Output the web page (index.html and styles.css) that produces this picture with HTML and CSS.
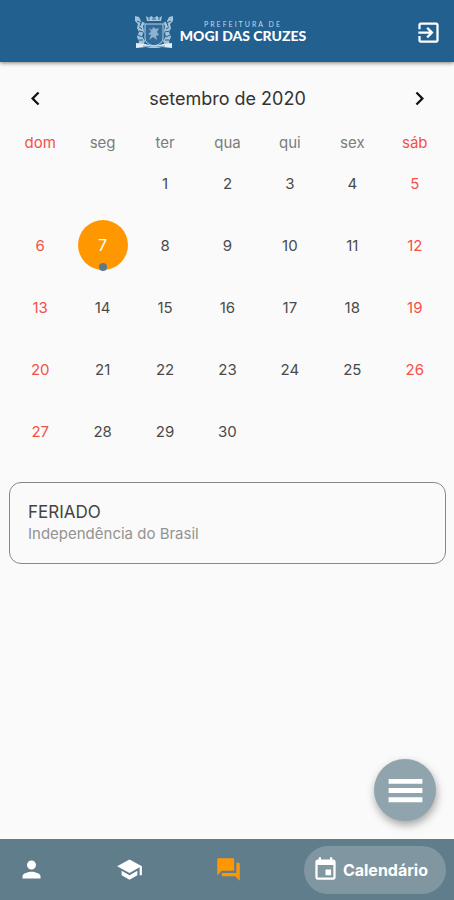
FILE: index.html
```html
<!DOCTYPE html>
<html lang="pt-BR">
  <head>
    <meta charset="UTF-8" />
    <meta name="viewport" content="width=device-width, initial-scale=1.0" />
    <title>Calendário - Mogi das Cruzes</title>
    <link rel="stylesheet" href="styles.css">
  </head>
  <body>
    <header class="topbar">
      <div class="brand">
        <svg class="crest" viewBox="0 0 40 36" aria-hidden="true">
          <!-- mural crown -->
          <path d="M12 2l3 2 2-2 3 2 3-2 2 2 3-2-1 5H13z" fill="#a9c6dd" />
          <path d="M14 5h2M18 5h4M24 5h2" stroke="#22608f" stroke-width="1" />
          <!-- supporters -->
          <path d="M1 2l4 1 2 4 4 2-2 3 1 5-2 5 3 5-2 5H4l1-5-2-4 2-5-2-4 1-4-3-3z" fill="#a4c2d9" />
          <path d="M39 2l-4 1-2 4-4 2 2 3-1 5 2 5-3 5 2 5h5l-1-5 2-4-2-5 2-4-1-4 3-3z" fill="#a4c2d9" />
          <path d="M3 7l5 2M5 13l3 2M4 21l4 2M37 7l-5 2M35 13l-3 2M36 21l-4 2M8 6l-2 6M32 6l2 6M5 17l4 1M35 17l-4 1M5 26l4 0M35 26l-4 0" stroke="#22608f" stroke-width="1" />
          <!-- shield -->
          <path d="M11 10h18v14q0 6-9 8-9-2-9-8z" fill="#2f6a98" stroke="#b9d1e2" stroke-width="1" />
          <path d="M15 14l3 2 1-3 3 2 3-1-2 4 2 3-3 1 1 4-4-3-4 3 2-5-3-1 3-2z" fill="#8fb3cf" />
          <!-- scroll -->
          <path d="M2 29l9 1q9 3 18 0l9-1v5l-10-1q-8 2-16 0l-10 1z" fill="#e3eef6" />
          <path d="M9 32q11 2 22 0" fill="none" stroke="#6f9abc" stroke-width="1" />
        </svg>
        <div class="brand-text">
          <span class="brand-small">PREFEITURA DE</span>
          <span class="brand-name">MOGI DAS CRUZES</span>
        </div>
      </div>
      <button class="icon-btn exit" aria-label="Sair">
        <svg class="icon" viewBox="0 0 24 24"><path d="M10.09 15.59L11.5 17l5-5-5-5-1.41 1.41L12.67 11H3v2h9.67l-2.58 2.59zM19 3H5c-1.11 0-2 .9-2 2v4h2V5h14v14H5v-4H3v4c0 1.1.89 2 2 2h14c1.1 0 2-.9 2-2V5c0-1.1-.9-2-2-2z" /></svg>
      </button>
    </header>

    <main class="content">
      <div class="month">
        <button class="icon-btn" aria-label="Mês anterior">
          <svg class="icon chevron" viewBox="0 0 24 24"><path d="M15.41 7.41L14 6l-6 6 6 6 1.41-1.41L10.83 12z" /></svg>
        </button>
        <h1 class="month-title">setembro de 2020</h1>
        <button class="icon-btn" aria-label="Próximo mês">
          <svg class="icon chevron" viewBox="0 0 24 24"><path d="M10 6L8.59 7.41 13.17 12l-4.58 4.59L10 18l6-6z" /></svg>
        </button>
      </div>

      <table class="calendar">
        <thead>
          <tr><th>dom</th><th>seg</th><th>ter</th><th>qua</th><th>qui</th><th>sex</th><th>sáb</th></tr>
        </thead>
        <tbody>
          <tr>
            <td></td>
            <td></td>
            <td><button class="day">1</button></td>
            <td><button class="day">2</button></td>
            <td><button class="day">3</button></td>
            <td><button class="day">4</button></td>
            <td><button class="day">5</button></td>
          </tr>
          <tr>
            <td><button class="day">6</button></td>
            <td><button class="day selected">7</button></td>
            <td><button class="day">8</button></td>
            <td><button class="day">9</button></td>
            <td><button class="day">10</button></td>
            <td><button class="day">11</button></td>
            <td><button class="day">12</button></td>
          </tr>
          <tr>
            <td><button class="day">13</button></td>
            <td><button class="day">14</button></td>
            <td><button class="day">15</button></td>
            <td><button class="day">16</button></td>
            <td><button class="day">17</button></td>
            <td><button class="day">18</button></td>
            <td><button class="day">19</button></td>
          </tr>
          <tr>
            <td><button class="day">20</button></td>
            <td><button class="day">21</button></td>
            <td><button class="day">22</button></td>
            <td><button class="day">23</button></td>
            <td><button class="day">24</button></td>
            <td><button class="day">25</button></td>
            <td><button class="day">26</button></td>
          </tr>
          <tr>
            <td><button class="day">27</button></td>
            <td><button class="day">28</button></td>
            <td><button class="day">29</button></td>
            <td><button class="day">30</button></td>
            <td></td>
            <td></td>
            <td></td>
          </tr>
        </tbody>
      </table>

      <section class="event">
        <h2 class="event-title">FERIADO</h2>
        <p class="event-text">Independência do Brasil</p>
      </section>
    </main>

    <div class="bottom">
      <button class="fab" aria-label="Menu">
        <svg class="fab-icon" viewBox="0 0 24 24"><path d="M3 18.2h18v-2.6H3v2.6zm0-4.9h18v-2.6H3v2.6zM3 5.8v2.6h18V5.8H3z" /></svg>
      </button>
      <nav class="tabs">
        <a class="tab" href="#perfil" aria-label="Perfil">
          <svg class="icon" viewBox="0 0 24 24"><path d="M12 12c2.21 0 4-1.79 4-4s-1.79-4-4-4-4 1.79-4 4 1.79 4 4 4zm0 2c-2.67 0-8 1.34-8 4v2h16v-2c0-2.66-5.33-4-8-4z" /></svg>
        </a>
        <a class="tab" href="#escola" aria-label="Escola">
          <svg class="icon" viewBox="0 0 24 24"><path d="M5 13.18v4L12 21l7-3.82v-4L12 17l-7-3.82zM12 3L1 9l11 6 9-4.91V17h2V9L12 3z" /></svg>
        </a>
        <a class="tab tab-alert" href="#mensagens" aria-label="Mensagens">
          <svg class="icon" viewBox="0 0 24 24"><path d="M21 6h-2v9H6v2c0 .55.45 1 1 1h11l4 4V7c0-.55-.45-1-1-1zm-4 6V3c0-.55-.45-1-1-1H3c-.55 0-1 .45-1 1v14l4-4h10c.55 0 1-.45 1-1z" /></svg>
        </a>
        <a class="tab tab-active" href="#calendario">
          <svg class="icon" viewBox="0 0 24 24"><path d="M17 12h-5v5h5v-5zM16 1v2H8V1H6v2H5c-1.11 0-1.99.9-1.99 2L3 19c0 1.1.89 2 2 2h14c1.1 0 2-.9 2-2V5c0-1.1-.9-2-2-2h-1V1h-2zm3 18H5V8h14v11z" /></svg>
          <span>Calendário</span>
        </a>
      </nav>
    </div>
  </body>
</html>
```

FILE: styles.css
```css
* {
  margin: 0;
  padding: 0;
  box-sizing: border-box;
}

body {
  display: flex;
  flex-direction: column;
  min-height: 100vh;
  background: #fafafa;
  color: #4a4a4a;
  font-family: Inter, Roboto, sans-serif;
}

button {
  border: none;
  background: none;
  color: inherit;
  font: inherit;
  cursor: pointer;
}

.icon {
  display: block;
  width: 27px;
  height: 27px;
  fill: currentColor;
}

.icon-btn {
  display: block;
}

/* header */
.topbar {
  display: grid;
  grid-template-columns: 1fr auto 1fr;
  align-items: center;
  height: 62px;
  padding: 2px 12px 0;
  background: #22608f;
  color: #fff;
  box-shadow: 0 1px 4px rgba(0, 0, 0, 0.5);
}

.brand {
  grid-column: 2;
  display: flex;
  align-items: center;
  gap: 6px;
  margin-right: 14px;
}

.crest {
  width: 40px;
  height: 36px;
}

.brand-text {
  display: flex;
  flex-direction: column;
  align-items: center;
  font-family: Lato, sans-serif;
}

.brand-small {
  font-size: 7px;
  line-height: 8px;
  letter-spacing: 2px;
  color: #c3d8e7;
}

.brand-name {
  font-size: 14px;
  line-height: 16px;
  font-weight: 900;
}

.exit {
  justify-self: end;
}

/* month bar */
.content {
  flex: 1;
  padding: 20px 8px 20px 9px;
}

.month {
  display: flex;
  align-items: center;
  justify-content: space-between;
  height: 32px;
  padding: 0 13px;
}

.month-title {
  font-size: 18px;
  font-weight: 400;
  color: #333;
}

.chevron {
  width: 27px;
  height: 27px;
  color: #111;
}

/* calendar */
.calendar {
  width: 100%;
  margin-top: 18px;
  table-layout: fixed;
  border-collapse: collapse;
  font-size: 15px;
  text-align: center;
}

.calendar th {
  height: 20px;
  font-weight: 400;
  color: #7c7c7c;
}

.calendar td {
  height: 62px;
}

.calendar th:first-child,
.calendar th:last-child,
.calendar td:first-child,
.calendar td:last-child {
  color: #f4504a;
}

.day {
  position: relative;
  width: 50px;
  height: 50px;
  border-radius: 50%;
}

.selected {
  background: #ff9800;
  color: #fff;
  font-size: 16px;
}

/* event marker */
.selected::after {
  content: "";
  position: absolute;
  bottom: -1px;
  left: calc(50% - 4px);
  width: 8px;
  height: 8px;
  border-radius: 50%;
  background: #5c7a8a;
}

.event {
  margin-top: 20px;
  padding: 18px;
  border: 1px solid #888;
  border-radius: 12px;
}

.event-title {
  font-size: 17px;
  line-height: 22px;
  font-weight: 400;
  color: #444;
}

.event-text {
  font-size: 15px;
  line-height: 22px;
  color: #939393;
}

/* bottom navigation */
.bottom {
  position: sticky;
  bottom: 0;
}

.fab {
  position: absolute;
  right: 18px;
  bottom: 79px;
  display: flex;
  align-items: center;
  justify-content: center;
  width: 62px;
  height: 62px;
  border-radius: 50%;
  background: #90a4ae;
  color: #fff;
  box-shadow: 1px 4px 8px rgba(0, 0, 0, 0.35);
}

.fab-icon {
  width: 45px;
  height: 45px;
  fill: currentColor;
}

.tabs {
  display: flex;
  align-items: center;
  justify-content: space-between;
  height: 61px;
  padding: 0 8px 0 9px;
  background: #607d8b;
}

.tab {
  display: flex;
  align-items: center;
  gap: 4px;
  height: 48px;
  padding: 0 9px;
  color: #fff;
  font-size: 16px;
  font-weight: 700;
  text-decoration: none;
}

.tab-alert {
  color: #ff9800;
}

.tab-active {
  padding: 0 18px 0 8px;
  border-radius: 24px;
  background: #8097a2;
}
```
